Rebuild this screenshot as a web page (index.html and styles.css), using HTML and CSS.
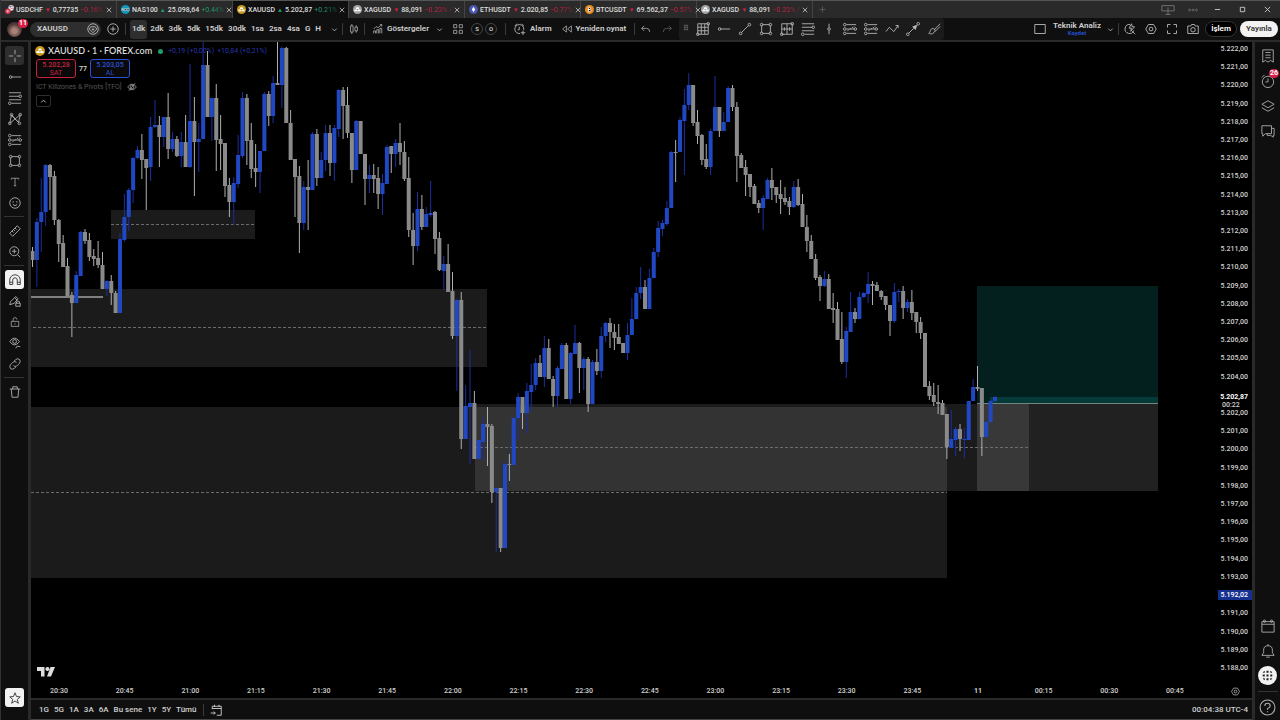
FILE: index.html
```html
<!DOCTYPE html>
<html lang="tr">
<head>
    <meta charset="UTF-8">
    <meta name="viewport" content="width=device-width, initial-scale=1.0">
    <title>XAUUSD 5.202,87</title>
    <link rel="stylesheet" href="styles.css">
</head>
<body>
    <!-- Icon sprite -->
    <svg class="sprite" aria-hidden="true">
        <symbol id="i-close" viewBox="0 0 16 16"><path d="M2 2l12 12M14 2L2 14"/></symbol>
        <symbol id="i-plus" viewBox="0 0 16 16"><path d="M8 1v14M1 8h14"/></symbol>
        <symbol id="i-chevron" viewBox="0 0 16 16"><path d="M3 6l5 5 5-5"/></symbol>
        <symbol id="i-up" viewBox="0 0 16 16"><path d="M3 10l5-5 5 5"/></symbol>
        <symbol id="i-gem" viewBox="0 0 16 16"><circle cx="8" cy="8" r="7"/><path d="M5 5h6l2 3-5 5-5-5zM8 7v3M6.500 8.500h3"/></symbol>
        <symbol id="i-addround" viewBox="0 0 16 16"><circle cx="8" cy="8" r="7"/><path d="M8 4.500v7M4.500 8h7"/></symbol>
        <symbol id="i-candles" viewBox="0 0 16 16"><path d="M4.500 0v3M4.500 13v3M11.500 2v3M11.500 11v3M2.500 3h4v10h-4zM9.500 5h4v6h-4z"/></symbol>
        <symbol id="i-indicator" viewBox="0 0 16 16"><path d="M1 8l4-4 3 2 6-5M11 1h3v3M1 15v-4h3v4M6 15V9h3v6M11 15V7h3v8"/></symbol>
        <symbol id="i-layout" viewBox="0 0 16 16"><path d="M1 1h5v5H1zM10 1h5v5h-5zM1 10h5v5H1zM10 10h5v5h-5z"/></symbol>
        <symbol id="i-alarm" viewBox="0 0 16 16"><path d="M13 9A6 6 0 1 0 8 14M7 5v4H5M1 4l3-3M10 1l3 3M12 10v6M9 13h6"/></symbol>
        <symbol id="i-replay" viewBox="0 0 16 16"><path d="M7 3v10L1 8zM15 3v10L9 8z"/></symbol>
        <symbol id="i-undo" viewBox="0 0 16 16"><path d="M5 3L1 7l4 4M1 7h8q5 0 5 6"/></symbol>
        <symbol id="i-redo" viewBox="0 0 16 16"><path d="M11 3l4 4-4 4M15 7H7q-5 0-5 6"/></symbol>
        <symbol id="i-grid" viewBox="0 0 16 16"><path d="M2 2h12v12H2zM2 6h12M2 10h12M6 2v12M10 2v12"/><circle cx="14" cy="2" r="1.500"/><circle cx="2" cy="14" r="1.500"/></symbol>
        <symbol id="i-ray" viewBox="0 0 16 16"><circle cx="3" cy="8" r="1.500"/><path d="M4 8h11"/></symbol>
        <symbol id="i-line" viewBox="0 0 16 16"><circle cx="3" cy="13" r="1.500"/><circle cx="13" cy="3" r="1.500"/><path d="M4 12l8-8"/></symbol>
        <symbol id="i-rect" viewBox="0 0 16 16"><path d="M4 3h8M4 13h8M3 4v8M13 4v8"/><circle cx="3" cy="3" r="1.500"/><circle cx="13" cy="3" r="1.500"/><circle cx="3" cy="13" r="1.500"/><circle cx="13" cy="13" r="1.500"/></symbol>
        <symbol id="i-profile" viewBox="0 0 16 16"><path d="M2 2h12v12H2zM2 8h12M8 2v12M5 6v4M11 6v4"/><circle cx="14" cy="2" r="1.500"/><circle cx="2" cy="14" r="1.500"/></symbol>
        <symbol id="i-fib" viewBox="0 0 16 16"><path d="M1 2h14M1 6h12M1 10h14M4 14h11"/><circle cx="14" cy="6" r="1.500"/><circle cx="2" cy="14" r="1.500"/></symbol>
        <symbol id="i-vline" viewBox="0 0 16 16"><path d="M8 2v4M8 10v4"/><circle cx="8" cy="8" r="1.500"/></symbol>
        <symbol id="i-position" viewBox="0 0 16 16"><path d="M4 3h11M4 8h9M4 13h11" /><path d="M5 10l8-5" stroke-dasharray="2 1"/><circle cx="2" cy="3" r="1.500"/><circle cx="2" cy="8" r="1.500"/><circle cx="2" cy="13" r="1.500"/><circle cx="14" cy="8" r="1.500"/></symbol>
        <symbol id="i-path" viewBox="0 0 16 16"><path d="M1 11l4-5 5 5 5-7M12 4h3v3"/></symbol>
        <symbol id="i-arrow" viewBox="0 0 16 16"><circle cx="2" cy="14" r="1.500"/><circle cx="14" cy="2" r="1.500"/><path d="M3 13l6-6"/><path class="solid" d="M13 3l-2 6-4-4z"/></symbol>
        <symbol id="i-brush" viewBox="0 0 16 16"><path d="M15 2L8 9M15 5l-6 6M2 13c2-1 1-3 3-5s6 1 3 4-5 1-6 1z"/></symbol>
        <symbol id="i-square" viewBox="0 0 16 16"><path d="M1 2h14v12H1z"/></symbol>
        <symbol id="i-quick" viewBox="0 0 16 16"><path d="M8 2a6 6 0 1 0 5 8M11 11l4 4M10 1L7 7h3l-1 4 5-6h-3z"/></symbol>
        <symbol id="i-settings" viewBox="0 0 16 16"><path d="M4.500 2h7L15 8l-3.500 6h-7L1 8z"/><circle cx="8" cy="8" r="2.500"/></symbol>
        <symbol id="i-full" viewBox="0 0 16 16"><path d="M2 6V2h4M10 2h4v4M14 10v4h-4M6 14H2v-4"/></symbol>
        <symbol id="i-camera" viewBox="0 0 16 16"><path d="M1 4h4l1-2h4l1 2h4v10H1z"/><circle cx="8" cy="9" r="3"/></symbol>
        <symbol id="i-cross" viewBox="0 0 16 16"><path d="M8 1v5M8 10v5M1 8h5M10 8h5"/></symbol>
        <symbol id="i-pattern" viewBox="0 0 16 16"><path d="M2 13L4 3l8 9 2-9M2 13l6-5 5 5M4 4l4 4 6-5"/><circle cx="4" cy="3" r="1.500"/><circle cx="14" cy="3" r="1.500"/><circle cx="2" cy="13" r="1.500"/><circle cx="13" cy="13" r="1.500"/></symbol>
        <symbol id="i-text" viewBox="0 0 16 16"><path d="M2 4V2h12v2M8 2v12M6 14h4"/></symbol>
        <symbol id="i-smile" viewBox="0 0 16 16"><circle cx="8" cy="8" r="7"/><path d="M5 10q3 3 6 0M5.500 5.500v2M10.500 5.500v2"/></symbol>
        <symbol id="i-ruler" viewBox="0 0 16 16"><path d="M1 11L11 1l4 4L5 15zM4 8l2 2M6 6l2 2M8 4l2 2"/></symbol>
        <symbol id="i-zoom" viewBox="0 0 16 16"><circle cx="7" cy="7" r="6"/><path d="M11.500 11.500L15 15M7 4v6M4 7h6"/></symbol>
        <symbol id="i-magnet" viewBox="0 0 16 16"><path d="M1 14V8a7 7 0 0 1 14 0v6h-4V8a3 3 0 0 0-6 0v6zM1 11h4M11 11h4"/></symbol>
        <symbol id="i-penlock" viewBox="0 0 16 16"><path d="M1 13l1-4 7-7 3 3-5 6-3 1zM8 4l3 3M9 11h6v4H9zM10 11V9q2-2 4 0v2"/></symbol>
        <symbol id="i-lock" viewBox="0 0 16 16"><path d="M2 7h12v8H2zM5 7V4q0-3 3-3t3 3M8 10v2"/></symbol>
        <symbol id="i-eye" viewBox="0 0 16 16"><path d="M1 6q6-9 13 0-7 9-13 0zM9 15l2-3 4 1"/><circle cx="7.500" cy="6" r="2.500"/></symbol>
        <symbol id="i-link" viewBox="0 0 16 16"><path d="M7 4l2-2q3-2 5 0t0 5l-4 4q-2 1-4-1M9 12l-2 2q-3 2-5 0t0-5l4-4q2-1 4 1"/></symbol>
        <symbol id="i-trash" viewBox="0 0 16 16"><path d="M1 4h14M5 4V1h6v3M3 4l1 11h8l1-11"/></symbol>
        <symbol id="i-star" viewBox="0 0 16 16"><path d="M8 1l2 5 5 .500-4 3.500 1.500 5L8 12l-4.500 3L5 10 1 6.500 6 6z"/></symbol>
        <symbol id="i-hidden" viewBox="0 0 16 16"><path d="M1 8q7-9 14 0-7 9-14 0zM3 14L13 2"/><circle cx="8" cy="8" r="3"/></symbol>
        <symbol id="i-list" viewBox="0 0 16 16"><path d="M2 1h12v14l-3-2-3 2-3-2-3 2zM5 4h6M5 7h6M5 10h6"/></symbol>
        <symbol id="i-clock" viewBox="0 0 16 16"><circle cx="8" cy="9" r="6.500"/><path d="M8 5v4H5M1 4l3-3"/></symbol>
        <symbol id="i-layers" viewBox="0 0 16 16"><path d="M8 2l7 4-7 4-7-4zM1 10l7 4 7-4"/></symbol>
        <symbol id="i-chat" viewBox="0 0 16 16"><path d="M1 2h11v9H5l-3 3v-3H1zM12 5h3v8h-1v2l-3-2H7v-2"/></symbol>
        <symbol id="i-calendar" viewBox="0 0 16 16"><path d="M1 3h14v12H1zM1 6h14"/><circle cx="4" cy="2.500" r="1.300"/><circle cx="12" cy="2.500" r="1.300"/></symbol>
        <symbol id="i-bell" viewBox="0 0 16 16"><path d="M1 13h14l-2-3V7q0-5-5-5T3 7v3zM8 2V0M6 15h4"/></symbol>
        <symbol id="i-apps" viewBox="0 0 16 16"><path class="solid" d="M1 1h3v3H1zM6.500 1h3v3h-3zM12 1h3v3h-3zM1 6.500h3v3H1zM6.500 6.500h3v3h-3zM12 6.500h3v3h-3zM1 12h3v3H1zM6.500 12h3v3h-3zM12 12h3v3h-3z"/></symbol>
        <symbol id="i-help" viewBox="0 0 16 16"><circle cx="8" cy="8" r="7"/><path d="M5.500 6.500Q5.500 4 8 4t2.500 2.500Q10.500 8 8 9v1M8 11.500v1"/></symbol>
        <symbol id="i-goto" viewBox="0 0 16 16"><path d="M3 7V3h12v12H9M3 6h12M6 1v3M12 1v3M1 12h6M5 10l2 2-2 2"/></symbol>
        <symbol id="i-desk" viewBox="0 0 16 16"><path d="M1 3h14v6H1zM8 5v8M5 13h6"/></symbol>
        <symbol id="i-dots" viewBox="0 0 16 16"><circle cx="2.500" cy="8" r="1.500"/><circle cx="8" cy="8" r="1.500"/><circle cx="13.500" cy="8" r="1.500"/></symbol>
        <symbol id="i-min" viewBox="0 0 16 16"><path d="M2 8h12"/></symbol>
        <symbol id="i-max" viewBox="0 0 16 16"><path d="M3 3h10v10H3z"/></symbol>
        <symbol id="c-gold" viewBox="0 0 16 16"><circle cx="8" cy="8" r="8" fill="#c79a1e" stroke="none"/><path fill="#fff" stroke="none" d="M6 4h4l1 3H5zM3 8h4l1 3H2zM9 8h4l1 3H8z"/></symbol>
        <symbol id="c-silver" viewBox="0 0 16 16"><circle cx="8" cy="8" r="8" fill="#a5a5a8" stroke="none"/><path fill="#fff" stroke="none" d="M6 4h4l1 3H5zM3 8h4l1 3H2zM9 8h4l1 3H8z"/></symbol>
        <symbol id="c-chf" viewBox="0 0 16 16"><circle cx="11" cy="5" r="5" fill="#e8e8ee" stroke="none"/><path d="M8 3h3" stroke="#2a4fb0" stroke-width="2"/><path d="M11 2h4M10 6h6" stroke="#c33"/><circle cx="5" cy="11" r="5" fill="#d22c4a" stroke="none"/><path d="M5 8v6M2 11h6" stroke="#fff"/></symbol>
        <symbol id="c-nas" viewBox="0 0 16 16"><circle cx="8" cy="8" r="8" fill="#0e94b8" stroke="none"/><path d="M2 10V6l2 4V6M6 6h3v4H6zM11 6h3v4h-3z" stroke="#fff"/></symbol>
        <symbol id="c-eth" viewBox="0 0 16 16"><circle cx="8" cy="8" r="8" fill="#4a56b0" stroke="none"/><path fill="#fff" stroke="none" d="M8 3l3 5-3 5-3-5z"/></symbol>
        <symbol id="c-btc" viewBox="0 0 16 16"><circle cx="8" cy="8" r="8" fill="#e88b1c" stroke="none"/><path d="M6 4v8h3q3-2 0-4H6h3q2-2 0-4z" stroke="#fff" stroke-width="1.500"/></symbol>
    </svg>

    <div class="app">
        <header class="tabs">
            <div class="tab"><svg class="coin"><use href="#c-chf"/></svg><b>USDCHF</b><i class="down">▼</i><b>0,77735</b><span class="down fade">−0.16%</span><button class="x" aria-label="Kapat"><svg class="icon"><use href="#i-close"/></svg></button></div>
            <div class="tab"><svg class="coin"><use href="#c-nas"/></svg><b>NAS100</b><i class="up">▲</i><b>25.098,64</b><span class="up fade">+0.44%</span><button class="x" aria-label="Kapat"><svg class="icon"><use href="#i-close"/></svg></button></div>
            <div class="tab current"><svg class="coin"><use href="#c-gold"/></svg><b>XAUUSD</b><i class="up">▲</i><b>5.202,87</b><span class="up fade">+0.21%</span><button class="x" aria-label="Kapat"><svg class="icon"><use href="#i-close"/></svg></button></div>
            <div class="tab"><svg class="coin"><use href="#c-silver"/></svg><b>XAGUSD</b><i class="down">▼</i><b>88,091</b><span class="down fade">−0.23% /</span><button class="x" aria-label="Kapat"><svg class="icon"><use href="#i-close"/></svg></button></div>
            <div class="tab"><svg class="coin"><use href="#c-eth"/></svg><b>ETHUSDT</b><i class="down">▼</i><b>2.020,85</b><span class="down fade">−0.77%</span><button class="x" aria-label="Kapat"><svg class="icon"><use href="#i-close"/></svg></button></div>
            <div class="tab"><svg class="coin"><use href="#c-btc"/></svg><b>BTCUSDT</b><i class="down">▼</i><b>69.562,37</b><span class="down fade">−0.57%</span><button class="x" aria-label="Kapat"><svg class="icon"><use href="#i-close"/></svg></button></div>
            <div class="tab"><svg class="coin"><use href="#c-silver"/></svg><b>XAGUSD</b><i class="down">▼</i><b>88,091</b><span class="down fade">−0.23% /</span><button class="x" aria-label="Kapat"><svg class="icon"><use href="#i-close"/></svg></button></div>
            <button class="new-tab" aria-label="Yeni sekme"><svg class="icon"><use href="#i-plus"/></svg></button>
            <div class="window-buttons">
                <button class="dim" aria-label="Masaüstü"><svg class="icon wide"><use href="#i-desk"/></svg></button>
                <button class="dim" aria-label="Menü"><svg class="icon"><use href="#i-dots"/></svg></button>
                <button aria-label="Küçült"><svg class="icon small"><use href="#i-min"/></svg></button>
                <button aria-label="Büyüt"><svg class="icon small"><use href="#i-max"/></svg></button>
                <button aria-label="Kapat"><svg class="icon small"><use href="#i-close"/></svg></button>
            </div>
        </header>

        <div class="toolbar">
            <div class="avatar"><span class="badge">11</span></div>
            <button class="symbol-search">XAUUSD <svg class="icon big"><use href="#i-gem"/></svg></button>
            <button class="tool" aria-label="Karşılaştır"><svg class="icon big"><use href="#i-addround"/></svg></button>
            <span class="sep"></span>
            <div class="intervals">
                <button class="active">1dk</button>
                <button>2dk</button>
                <button>3dk</button>
                <button>5dk</button>
                <button>15dk</button>
                <button>30dk</button>
                <button>1sa</button>
                <button>2sa</button>
                <button>4sa</button>
                <button>G</button>
                <button>H</button>
            </div>
            <button class="tool narrow" aria-label="Aralıklar"><svg class="icon small"><use href="#i-chevron"/></svg></button>
            <span class="sep"></span>
            <button class="tool" aria-label="Mumlar"><svg class="icon"><use href="#i-candles"/></svg></button>
            <span class="sep"></span>
            <button class="labeled"><svg class="icon"><use href="#i-indicator"/></svg>Göstergeler</button>
            <button class="tool" aria-label="Favoriler"><svg class="icon small"><use href="#i-chevron"/></svg></button>
            <button class="tool narrow" aria-label="Şablonlar"><svg class="icon"><use href="#i-layout"/></svg></button>
            <div class="rounds"><button>S</button><button>O</button></div>
            <span class="sep"></span>
            <button class="labeled alarm"><svg class="icon big"><use href="#i-alarm"/></svg>Alarm</button>
            <button class="labeled replay"><svg class="icon"><use href="#i-replay"/></svg>Yeniden oynat</button>
            <span class="sep"></span>
            <button class="tool" aria-label="Geri al"><svg class="icon"><use href="#i-undo"/></svg></button>
            <button class="tool dim" aria-label="Yinele"><svg class="icon"><use href="#i-redo"/></svg></button>
            <div class="favorites">
                <span class="grip">⠿</span>
                <button aria-label="Izgara"><svg class="icon large"><use href="#i-grid"/></svg></button>
                <button aria-label="Yatay ışın"><svg class="icon large"><use href="#i-ray"/></svg></button>
                <button aria-label="Trend çizgisi"><svg class="icon large"><use href="#i-line"/></svg></button>
                <button aria-label="Dikdörtgen"><svg class="icon large"><use href="#i-rect"/></svg></button>
                <button aria-label="Profil"><svg class="icon large"><use href="#i-profile"/></svg></button>
                <button aria-label="Fibonacci"><svg class="icon large"><use href="#i-fib"/></svg></button>
                <button aria-label="Dikey çizgi"><svg class="icon large"><use href="#i-vline"/></svg></button>
                <button aria-label="Uzun pozisyon"><svg class="icon large"><use href="#i-position"/></svg></button>
                <button aria-label="Kısa pozisyon"><svg class="icon large"><use href="#i-position"/></svg></button>
                <button aria-label="Yol"><svg class="icon large"><use href="#i-path"/></svg></button>
                <button aria-label="Ok"><svg class="icon large"><use href="#i-arrow"/></svg></button>
                <button aria-label="Fırça"><svg class="icon large"><use href="#i-brush"/></svg></button>
            </div>
            <div class="toolbar-right">
                <button class="tool" aria-label="Düzen"><svg class="icon big"><use href="#i-square"/></svg></button>
                <button class="layout-name">Teknik Analiz<small>Kaydet</small></button>
                <button class="tool narrow" aria-label="Düzenler"><svg class="icon small"><use href="#i-chevron"/></svg></button>
                <span class="sep"></span>
                <button class="tool" aria-label="Hızlı arama"><svg class="icon big"><use href="#i-quick"/></svg></button>
                <button class="tool" aria-label="Ayarlar"><svg class="icon big"><use href="#i-settings"/></svg></button>
                <button class="tool" aria-label="Tam ekran"><svg class="icon big"><use href="#i-full"/></svg></button>
                <button class="tool" aria-label="Görüntü al"><svg class="icon big"><use href="#i-camera"/></svg></button>
                <button class="pill trade">İşlem</button>
                <button class="pill publish">Yayınla</button>
            </div>
        </div>

        <div class="main">
            <nav class="drawing-bar">
                <button class="active" aria-label="İmleç"><svg class="icon large"><use href="#i-cross"/></svg></button>
                <button aria-label="Işın"><svg class="icon large"><use href="#i-ray"/></svg></button>
                <button aria-label="Fibonacci"><svg class="icon large"><use href="#i-fib"/></svg></button>
                <button aria-label="Formasyon"><svg class="icon large"><use href="#i-pattern"/></svg></button>
                <button aria-label="Pozisyon"><svg class="icon large"><use href="#i-position"/></svg></button>
                <button aria-label="Dikdörtgen"><svg class="icon large"><use href="#i-rect"/></svg></button>
                <button aria-label="Metin"><svg class="icon"><use href="#i-text"/></svg></button>
                <button aria-label="İkon"><svg class="icon big"><use href="#i-smile"/></svg></button>
                <hr>
                <button aria-label="Ölçüm"><svg class="icon big"><use href="#i-ruler"/></svg></button>
                <button aria-label="Yakınlaştır"><svg class="icon big"><use href="#i-zoom"/></svg></button>
                <hr>
                <button class="on" aria-label="Mıknatıs"><svg class="icon big"><use href="#i-magnet"/></svg></button>
                <button aria-label="Çizim modu"><svg class="icon big"><use href="#i-penlock"/></svg></button>
                <button aria-label="Kilitle"><svg class="icon"><use href="#i-lock"/></svg></button>
                <button aria-label="Gizle"><svg class="icon big"><use href="#i-eye"/></svg></button>
                <button aria-label="Bağla"><svg class="icon big"><use href="#i-link"/></svg></button>
                <hr>
                <button aria-label="Sil"><svg class="icon big"><use href="#i-trash"/></svg></button>
                <button class="on last" aria-label="Favori araçlar"><svg class="icon big"><use href="#i-star"/></svg></button>
            </nav>

            <div class="center">
                <div class="chart">
                    <div class="plot">
                        <svg id="candles" viewBox="31 42 1187 642" preserveAspectRatio="none"></svg>
                        <div class="legend">
                            <div class="legend-title">
                                <svg class="coin"><use href="#c-gold"/></svg>
                                <h1>XAUUSD · 1 · FOREX.com</h1>
                                <span class="market-dot"></span>
                                <span class="change">+0,19 (+0,00%)</span>
                                <span class="change">+10,84 (+0,21%)</span>
                            </div>
                            <div class="quotes">
                                <button class="sell">5.202,28<span>SAT</span></button>
                                <b>77</b>
                                <button class="buy">5.203,05<span>AL</span></button>
                            </div>
                            <div class="study">ICT Killzones &amp; Pivots [TFO] <svg class="icon"><use href="#i-hidden"/></svg></div>
                            <button class="collapse" aria-label="Daralt"><svg class="icon small"><use href="#i-up"/></svg></button>
                        </div>
                        <svg class="logo" viewBox="0 0 36 20"><path d="M0 0h15v19H8V8H0zM21 0a4 4 0 1 1-1 7.900A4 4 0 0 1 20 0zM27 0h9l-8 19h-8z"/></svg>
                    </div>
                    <div class="price-axis">
                        <div id="prices"></div>
                        <div class="last-price"><b>5.202,87</b><span>00:22</span></div>
                    </div>
                    <div class="time-axis" id="times"></div>
                    <button class="axis-settings" aria-label="Eksen ayarları"><svg class="icon"><use href="#i-settings"/></svg></button>
                </div>
                <footer class="ranges">
                    <button>1G</button>
                    <button>5G</button>
                    <button>1A</button>
                    <button>3A</button>
                    <button>6A</button>
                    <button>Bu sene</button>
                    <button>1Y</button>
                    <button>5Y</button>
                    <button>Tümü</button>
                    <span class="sep"></span>
                    <button aria-label="Tarihe git"><svg class="icon big"><use href="#i-goto"/></svg></button>
                    <button class="clock">00:04:38 UTC-4</button>
                </footer>
            </div>

            <aside class="side-bar">
                <button aria-label="İzleme listesi"><svg class="icon large"><use href="#i-list"/></svg></button>
                <button aria-label="Alarmlar"><svg class="icon large"><use href="#i-clock"/></svg><span class="badge">26</span></button>
                <button aria-label="Katmanlar"><svg class="icon large"><use href="#i-layers"/></svg></button>
                <button aria-label="Sohbet"><svg class="icon large"><use href="#i-chat"/></svg></button>
                <button class="push" aria-label="Takvim"><svg class="icon large"><use href="#i-calendar"/></svg></button>
                <button aria-label="Bildirimler"><svg class="icon large"><use href="#i-bell"/></svg></button>
                <button class="apps" aria-label="Ürünler"><svg class="icon"><use href="#i-apps"/></svg></button>
                <hr>
                <button aria-label="Yardım"><svg class="icon xl"><use href="#i-help"/></svg></button>
            </aside>
        </div>
    </div>
    <script src="app.js"></script>
</body>
</html>
```
FILE: styles.css
```css
* {
    box-sizing: border-box;
}

body {
    margin: 0;
    background: #000;
    color: #d0d0d0;
    font-family: Roboto, "Liberation Sans", sans-serif;
    font-size: 8px;
    line-height: 10px;
}

button {
    display: flex;
    align-items: center;
    justify-content: center;
    margin: 0;
    padding: 0;
    border: 0;
    background: none;
    color: inherit;
    font: inherit;
    white-space: nowrap;
    cursor: pointer;
}

hr {
    width: 20px;
    height: 1px;
    margin: 3px auto;
    border: 0;
    background: #333;
}

.sprite {
    position: absolute;
    width: 0;
    height: 0;
}

/* Icons */
.icon {
    width: 10px;
    height: 10px;
    flex: none;
    fill: none;
    stroke: currentColor;
    stroke-width: 1.2;
}

.icon.small { width: 7px; height: 7px; stroke-width: 2; }
.icon.big { width: 12px; height: 12px; }
.icon.large, .icon.wide { width: 14px; height: 14px; stroke-width: 1; }
.icon.xl { width: 17px; height: 17px; stroke-width: 1; }

.solid {
    fill: currentColor;
    stroke: none;
}

.coin {
    width: 9px;
    height: 9px;
    flex: none;
}

.up { color: #1e9c70; }
.down { color: #c8213f; }
.dim { color: #777; }

.sep {
    width: 1px;
    height: 12px;
    background: #3a3a3a;
    flex: none;
}

.badge {
    position: absolute;
    top: 1px;
    right: 1px;
    min-width: 10px;
    height: 9px;
    padding: 0 1px;
    border-radius: 5px;
    background: #d81f47;
    color: #fff;
    font-size: 7px;
    font-weight: 700;
    line-height: 9px;
    text-align: center;
}

.app {
    display: flex;
    flex-direction: column;
    height: 100vh;
    border-left: 1px solid #333;
    overflow: hidden;
}

/* Browser tabs */
.tabs {
    display: flex;
    height: 18px;
    flex: none;
    border-top: 1px solid #555;
    background: #2a2a2a;
    font-size: 7px;
}

.tab {
    display: flex;
    align-items: center;
    flex: none;
    width: 116px;
    padding: 0 4px;
    gap: 2px;
    border-right: 1px solid #444;
    white-space: nowrap;
}

.tab.current {
    background: #0f0f0f;
}

.tab b {
    font-weight: 500;
    color: #ddd;
}

.tab i {
    width: 6px;
    font-size: 6px;
    font-style: normal;
}

.tab .fade {
    mask-image: linear-gradient(to right, #000 50%, rgba(0, 0, 0, 0.3));
}

.x {
    margin-left: auto;
}

.x .icon {
    width: 6px;
    height: 6px;
    stroke-width: 2;
}

.new-tab {
    width: 18px;
    color: #777;
}

.new-tab .icon {
    width: 7px;
    height: 7px;
}

.window-buttons {
    display: flex;
    margin-left: auto;
}

.window-buttons button {
    width: 25px;
}

/* Top toolbar */
.toolbar {
    display: flex;
    align-items: center;
    height: 24px;
    flex: none;
    border-bottom: 2px solid #2a2a2a;
    background: #0f0f0f;
    font-weight: 600;
}

.toolbar .icon {
    color: #b8b8b8;
}

.toolbar .dim .icon {
    color: #666;
}

.avatar {
    position: relative;
    width: 28px;
    height: 22px;
    flex: none;
}

.avatar::before {
    content: "";
    position: absolute;
    left: 6px;
    top: 4px;
    width: 15px;
    height: 15px;
    border-radius: 50%;
    background: radial-gradient(circle at 50% 60%, #a98278 20%, #4a3632 60%);
}

.symbol-search {
    justify-content: space-between;
    width: 71px;
    height: 15px;
    margin-left: 1px;
    padding: 0 2px 0 7px;
    border-radius: 8px;
    background: #2e2e2e;
}

.tool {
    width: 21px;
    height: 20px;
    flex: none;
}

.tool.narrow {
    width: 15px;
}

.symbol-search + .tool {
    margin: 0 2px 0 1px;
}

.intervals {
    display: flex;
    gap: 1px;
    margin: 0 4px;
}

.intervals button {
    height: 19px;
    padding: 0 2px;
    border-radius: 3px;
}

.intervals .active {
    background: #2e2e2e;
}

.labeled {
    gap: 4px;
    margin-left: 8px;
}

.labeled.replay {
    margin: 0 8px 0 10px;
}

.rounds {
    display: flex;
    gap: 2px;
    margin: 0 8px 0 6px;
}

.rounds button {
    width: 12px;
    height: 12px;
    border: 1px solid #444;
    border-radius: 50%;
    font-size: 6px;
}

.favorites {
    display: flex;
    align-items: center;
    height: 22px;
    margin-left: 2px;
    border-radius: 3px;
    background: #1b1b1b;
}

.favorites button {
    width: 21px;
}

.grip {
    width: 13px;
    color: #666;
    text-align: center;
}

.toolbar-right {
    display: flex;
    align-items: center;
    margin-left: auto;
    padding-right: 2px;
}

.layout-name {
    flex-direction: column;
    margin: 0 2px;
    line-height: 8px;
}

.layout-name small {
    color: #2450d8;
    font-size: 6px;
    line-height: 6px;
}

.pill {
    height: 16px;
    border-radius: 8px;
}

.trade {
    width: 32px;
    margin: 0 3px 0 2px;
    border: 1px solid #333;
    background: #000;
    color: #fff;
}

.publish {
    width: 38px;
    background: #f2f2f2;
    color: #333;
}

/* Main area */
.main {
    display: flex;
    flex: 1;
    min-height: 0;
}

.drawing-bar,
.side-bar {
    display: flex;
    flex-direction: column;
    flex: none;
    background: #0f0f0f;
}

.drawing-bar {
    width: 30px;
    padding: 3px 4px 12px 3px;
    border-right: 3px solid #2a2a2a;
}

.drawing-bar button {
    width: 19px;
    height: 19px;
    margin: 1px;
    flex: none;
    border-radius: 3px;
    color: #b0b0b0;
}

.drawing-bar .active {
    background: #2e2e2e;
}

.drawing-bar .on {
    background: #f2f2f2;
    color: #333;
}

.drawing-bar .last {
    margin-top: auto;
}

.side-bar {
    width: 28px;
    padding-top: 1px;
    border-left: 3px solid #2a2a2a;
}

.side-bar button {
    position: relative;
    height: 25px;
    color: #b0b0b0;
}

.side-bar .push {
    margin-top: auto;
}

.side-bar .apps .icon {
    width: 19px;
    height: 19px;
    padding: 4px;
    border-radius: 50%;
    background: #f2f2f2;
    color: #222;
}

.center {
    display: flex;
    flex-direction: column;
    flex: 1;
    min-width: 0;
}

.chart {
    display: grid;
    grid-template-columns: 1fr 34px;
    grid-template-rows: 1fr 14px;
    flex: 1;
    min-height: 0;
}

.plot {
    position: relative;
    min-height: 0;
}

#candles {
    display: block;
    width: 100%;
    height: 100%;
}

.zone { fill: rgba(255, 255, 255, 0.107); }
.risk { fill: rgba(255, 255, 255, 0.13); }
.target { fill: #04201e; }
.target-hit { fill: #063a38; }
.entry { fill: #6f8584; }
.level { fill: #808080; }
.mid { stroke: #6c6c6c; stroke-dasharray: 3 2; }
.candle-up { fill: #2148c4; }
.candle-down { fill: #8a8a8a; }
.wick-up { fill: #1c2f9c; }
.wick-down { fill: #b0b0b0; }

/* Legend over the chart */
.legend {
    position: absolute;
    top: 3px;
    left: 4px;
}

.legend-title {
    display: flex;
    align-items: center;
    height: 12px;
    color: #2637a8;
    font-size: 7px;
}

.legend-title .coin {
    width: 10px;
    height: 10px;
}

.legend h1 {
    margin: 0 6px 0 3px;
    color: #ddd;
    font-family: Lato, sans-serif;
    font-size: 9px;
    font-weight: 600;
}

.market-dot {
    width: 5px;
    height: 5px;
    margin-right: 2px;
    border-radius: 50%;
    background: #1e9c70;
}

.change {
    margin-left: 3px;
}

.quotes {
    display: flex;
    align-items: center;
    gap: 3px;
    margin: 2px 0 0 1px;
    font-size: 7px;
}

.quotes b {
    font-weight: 600;
}

.quotes button {
    flex-direction: column;
    width: 40px;
    height: 19px;
    border: 1px solid;
    border-radius: 3px;
    background: #0a0a0a;
    line-height: 8px;
    font-weight: 500;
}

.quotes span {
    font-weight: 400;
}

.sell { color: #c8213f; }
.buy { color: #2c50d8; }

.study {
    display: flex;
    align-items: center;
    gap: 5px;
    height: 10px;
    margin: 4px 0 0 1px;
    color: #555;
    font-size: 7px;
}

.study .icon {
    color: #aaa;
}

.collapse {
    width: 15px;
    height: 12px;
    margin: 3px 0 0 1px;
    border: 1px solid #2e2e2e;
    border-radius: 2px;
}

.logo {
    position: absolute;
    left: 6px;
    bottom: 7px;
    width: 18px;
    height: 10px;
    fill: #ddd;
}

/* Axes */
.price-axis {
    position: relative;
    font-size: 7px;
    font-weight: 500;
}

#prices {
    display: flex;
    flex-direction: column;
    justify-content: space-between;
    height: 100%;
    padding: 2px 0 11px;
}

#prices span {
    height: 10px;
    padding-right: 4px;
    text-align: right;
}

#prices .marked {
    background: #15308f;
    color: #fff;
}

.last-price {
    position: absolute;
    top: 351px;
    right: 4px;
    width: 26px;
    line-height: 8px;
}

.last-price b,
.last-price span {
    display: block;
}

.last-price b {
    display: flex;
    justify-content: flex-end;
    color: #fff;
}

.time-axis {
    display: flex;
    justify-content: space-between;
    align-items: center;
    padding: 0 34px 0 19px;
    font-size: 7px;
    font-weight: 500;
}

.time-axis span {
    width: 18px;
    text-align: center;
}

.time-axis .day {
    font-weight: 700;
}

.axis-settings .icon {
    width: 9px;
    height: 9px;
}

/* Bottom bar */
.ranges {
    display: flex;
    align-items: center;
    gap: 5px;
    height: 22px;
    flex: none;
    padding: 0 4px 0 8px;
    border-top: 2px solid #2a2a2a;
    border-bottom: 1px solid #444;
    background: #0f0f0f;
    font-weight: 500;
}

.ranges .sep {
    margin: 0 1px;
}

.clock {
    margin-left: auto;
}
```
FILE: app.js
```js
// One entry per minute from 20:24: direction, then high, body top, body bottom, low
const candles = `
d247,251,260,267 u218,222,260,287 u178,212,222,252 u164,165,212,226 d164,165,177,210 d171,176,220,225
d219,220,244,262 d235,243,267,267 d258,266,296,296 d292,295,303,337 u271,275,303,303 u231,232,276,276
d229,232,241,244 d233,240,257,261 d249,256,259,266 d241,258,265,268 d252,265,289,289 u280,281,289,296
d275,281,293,305 d291,293,313,313 u233,239,313,313 u194,217,240,242 u188,190,217,231 u157,158,190,203
u146,150,158,159 d134,150,160,179 d159,159,168,210 u117,127,167,181 u100,125,127,128 d116,125,137,167
u117,117,137,147 d93,117,149,159 u132,139,149,152 d136,139,156,157 u132,142,156,167 d115,142,167,167
u64,121,167,168 d97,121,142,196 u123,139,142,172 u40,65,139,139 d51,65,117,117 u98,98,117,141
d84,98,140,171 d115,139,144,170 d143,143,186,197 d178,185,202,217 u177,183,202,225 u135,155,184,188
u92,98,156,158 d94,98,141,165 d123,140,169,178 d144,168,172,187 u151,151,172,193 u92,94,151,151
d91,94,116,126 u76,83,116,123 d42,83,85,85 u46,48,85,108 d47,48,123,123 d110,123,160,160
d159,159,177,217 d166,176,223,253 u181,187,223,230 d160,187,190,230 u132,134,190,190 d129,134,178,186
u152,160,178,178 u125,133,160,171 d125,133,163,176 u125,128,163,181 u89,90,129,137 d87,90,106,139
d87,105,133,138 d133,133,170,183 u120,121,170,170 d121,121,154,154 d154,154,179,205 u165,175,179,193
d164,175,179,193 d167,178,194,209 u174,183,194,215 u145,147,184,184 d146,146,154,173 u139,143,154,167
d123,143,152,165 d141,152,179,181 d157,178,230,237 d213,230,246,265 u192,209,246,251 d195,209,227,230
u207,214,227,227 u181,213,215,217 d211,212,239,254 d232,238,270,271 u256,264,271,290 d244,264,292,292
d272,291,336,339 u299,300,336,391 d292,300,439,449 u385,406,439,439 u350,403,407,464 d391,403,459,459
u440,440,459,459 u417,424,442,460 d407,424,427,466 d424,426,492,503 u488,488,492,552 d488,488,548,552
u461,464,548,548 d454,464,465,481 u417,418,465,465 u393,397,418,440 d397,397,413,429 u383,391,413,433
u364,385,392,412 u358,363,385,390 d355,363,377,377 u336,348,377,387 d339,348,379,379 d376,379,396,407
u366,368,396,407 u343,345,369,369 d343,345,399,399 u352,353,399,404 u325,343,354,354 d342,343,368,393
u357,359,368,390 d357,359,404,412 u360,362,404,404 d349,362,371,375 u327,336,371,378 u322,323,336,342
d318,323,332,348 d324,332,338,350 d324,337,344,344 d343,343,353,353 u323,335,353,360 u298,319,335,335
u287,293,319,319 u267,287,293,299 d280,287,309,309 u269,278,309,309 u248,252,278,278 u221,228,252,257
u220,223,229,236 u201,208,224,226 u151,152,208,208 d140,152,153,182 u117,120,152,152 u89,105,121,175
u73,85,105,110 d85,85,123,126 d110,122,136,144 d134,135,160,165 d144,159,167,169 u129,131,167,175
u76,107,131,131 d107,107,131,137 u112,122,131,131 u86,88,122,122 d85,88,107,111 d102,107,156,182
d153,155,168,168 d160,167,175,196 d174,174,187,197 d184,186,204,204 d200,203,208,213 u195,198,208,230
u178,180,199,199 d168,180,188,200 d187,187,195,203 d180,194,199,214 d187,198,202,205 d197,201,207,215
u181,187,207,208 d179,187,205,206 d194,204,227,227 d215,227,241,252 d235,241,259,259 d254,259,278,280
d275,277,286,301 u271,279,286,287 d274,279,309,309 d293,308,310,323 d302,309,340,340 d312,339,362,364
u327,331,362,378 u292,312,332,332 d308,312,319,323 u292,297,319,319 u292,293,297,298 u272,284,294,303
d281,284,286,305 d282,285,291,291 d290,291,297,300 d296,296,305,310 d305,305,321,336 u283,292,321,323
u289,291,292,302 d286,291,308,319 u299,302,308,312 d290,302,313,320 d312,312,322,333 d317,322,333,339
d333,333,387,387 d381,386,396,400 d383,395,402,406 d385,402,404,414 d400,403,415,415 d414,414,447,459
u410,439,448,448 u427,429,440,456 d424,429,439,451 u428,439,440,458 u401,401,440,440 u379,387,401,401
d366,387,389,391 d388,388,437,456 u421,422,437,437 u400,401,422,422 u396,397,401,402
`.trim().split(/\s+/);

const FIRST_X = 32.5;
const STEP = 4.375;

function rect(cls, x, y, w, h) {
    return `<rect class="${cls}" x="${x}" y="${y}" width="${w}" height="${h}"/>`;
}

function mid(x1, x2, y) {
    return `<line class="mid" x1="${x1}" x2="${x2}" y1="${y}" y2="${y}"/>`;
}

function drawChart() {
    let out = '';

    // Zones and the open position
    out += rect('zone', 111, 210, 144, 29);
    out += rect('zone', 31, 289, 456, 78);
    out += rect('zone', 31, 407, 916, 171);
    out += rect('zone', 475, 404, 554, 87);
    out += rect('risk', 977, 404, 181, 87);
    out += rect('target', 977, 286, 181, 118);
    out += rect('target-hit', 990, 397, 168, 6);
    out += rect('entry', 977, 403, 181, 1);
    out += rect('level', 31, 296, 72, 2);
    out += mid(111, 256, 224.5) + mid(33, 487, 327.5) + mid(31, 947, 492.5) + mid(475, 1029, 447.5);

    // Candles
    candles.forEach((c, i) => {
        const dir = c[0] === 'u' ? 'up' : 'down';
        const [high, top, bottom, low] = c.slice(1).split(',').map(Number);
        const x = FIRST_X + i * STEP;
        out += rect('wick-' + dir, x - 0.5, high, 1, low - high);
        out += rect('candle-' + dir, x - 2, top, 4, Math.max(bottom - top, 1));
    });

    document.getElementById('candles').innerHTML = out;
}

function drawAxes() {
    let prices = '';
    for (let p = 5222; p >= 5188; p--) {
        const text = '5.' + (p - 5000) + ',00';
        if (p === 5203) {
            prices += '<span></span>'; // covered by the last price
        } else if (p === 5192) {
            prices += '<span class="marked">5.192,02</span>';
        } else {
            prices += `<span>${text}</span>`;
        }
    }
    document.getElementById('prices').innerHTML = prices;

    let times = '';
    for (let m = 20 * 60 + 30; m <= 24 * 60 + 45; m += 15) {
        const h = String(Math.floor(m / 60) % 24).padStart(2, '0');
        const min = String(m % 60).padStart(2, '0');
        times += m === 24 * 60 ? '<span class="day">11</span>' : `<span>${h}:${min}</span>`;
    }
    document.getElementById('times').innerHTML = times;
}

drawChart();
drawAxes();
```
